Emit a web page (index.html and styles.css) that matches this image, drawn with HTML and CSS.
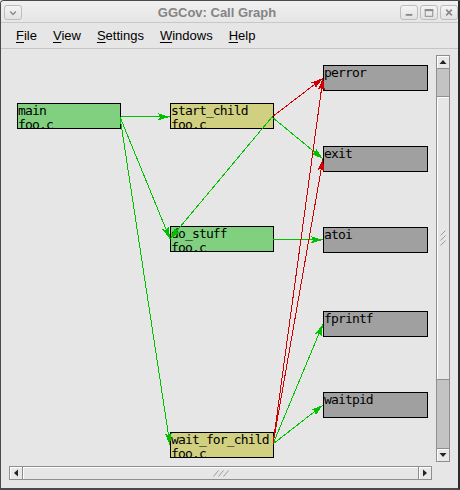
FILE: index.html
```html
<!DOCTYPE html>
<html>
<head>
<meta charset="utf-8">
<title>GGCov: Call Graph</title>
<link rel="stylesheet" href="styles.css">
</head>
<body>
<div class="window">
  <div class="titlebar">
    <div class="tbtn">
      <svg width="17" height="14" viewBox="0 0 17 14"><path d="M5.5,5.5 L8.5,8.5 L11.5,5.5" fill="none" stroke="#8a8a8a" stroke-width="1.6"/></svg>
    </div>
    <div class="title">GGCov: Call Graph</div>
    <div class="tbtns">
      <div class="tbtn"><svg width="17" height="14" viewBox="0 0 17 14"><rect x="5" y="8" width="7" height="2" fill="#8a8a8a"/></svg></div>
      <div class="tbtn"><svg width="17" height="14" viewBox="0 0 17 14"><rect x="4.5" y="3.5" width="8" height="7" fill="none" stroke="#8a8a8a"/><rect x="4" y="3" width="9" height="2" fill="#8a8a8a"/></svg></div>
      <div class="tbtn"><svg width="17" height="14" viewBox="0 0 17 14"><path d="M5.5,3.5 L11.5,9.5 M11.5,3.5 L5.5,9.5" stroke="#8a8a8a" stroke-width="1.8"/></svg></div>
    </div>
  </div>
  <div class="menubar">
    <span class="menu"><u>F</u>ile</span>
    <span class="menu"><u>V</u>iew</span>
    <span class="menu"><u>S</u>ettings</span>
    <span class="menu"><u>W</u>indows</span>
    <span class="menu"><u>H</u>elp</span>
  </div>
  <div class="content">
    <div class="canvas">
      <div class="node green" style="left:8px;top:48px">main<br>foo.c</div>
      <div class="node khaki" style="left:161px;top:48px">start_child<br>foo.c</div>
      <div class="node green" style="left:161px;top:171px">do_stuff<br>foo.c</div>
      <div class="node khaki" style="left:161px;top:377px">wait_for_child<br>foo.c</div>
      <div class="node grey" style="left:314px;top:10px">perror</div>
      <div class="node grey" style="left:314px;top:91px">exit</div>
      <div class="node grey" style="left:314px;top:172px">atoi</div>
      <div class="node grey" style="left:314px;top:256px">fprintf</div>
      <div class="node grey" style="left:314px;top:337px">waitpid</div>
      <svg class="edges" width="423" height="407" viewBox="9 55 423 407">
        <defs>
          <marker id="ag" markerUnits="userSpaceOnUse" markerWidth="13" markerHeight="8" refX="12" refY="4" orient="auto" viewBox="0 0 13 8">
            <path d="M0,0.5 L12,4 L0,7.5 L2,4 z" fill="#00c000"/>
          </marker>
          <marker id="ar" markerUnits="userSpaceOnUse" markerWidth="13" markerHeight="8" refX="12" refY="4" orient="auto" viewBox="0 0 13 8">
            <path d="M0,0.5 L12,4 L0,7.5 L2,4 z" fill="#d00000"/>
          </marker>
        </defs>
        <g class="g">
          <line x1="120" y1="116" x2="170" y2="117" marker-end="url(#ag)"/>
          <line x1="120" y1="117" x2="170" y2="239" marker-end="url(#ag)"/>
          <line x1="120" y1="117" x2="170" y2="445" marker-end="url(#ag)"/>
          <line x1="272" y1="117" x2="170" y2="239" marker-end="url(#ag)"/>
          <line x1="272" y1="117" x2="323" y2="159" marker-end="url(#ag)"/>
          <line x1="272" y1="239" x2="323" y2="240" marker-end="url(#ag)"/>
          <line x1="273" y1="444" x2="323" y2="324" marker-end="url(#ag)"/>
          <line x1="273" y1="444" x2="323" y2="405" marker-end="url(#ag)"/>
        </g>
        <g class="r">
          <line x1="272" y1="117" x2="323" y2="78" marker-end="url(#ar)"/>
          <line x1="273" y1="444" x2="323" y2="78" marker-end="url(#ar)"/>
          <line x1="273" y1="444" x2="323" y2="159" marker-end="url(#ar)"/>
        </g>
      </svg>
    </div>
    <div class="vscroll">
      <div class="sbtn vb-top"><svg width="12" height="12" viewBox="0 0 12 12"><path d="M2.5,8 L6,4 L9.5,8 z" fill="#222"/></svg></div>
      <div class="vtrough-a"></div>
      <div class="vthumb"><svg width="8" height="16" viewBox="0 0 8 16"><path d="M1.5,5.5 L6.5,0.5 M1.5,10.5 L6.5,5.5 M1.5,15.5 L6.5,10.5" stroke="#9a9a9a"/></svg></div>
      <div class="vtrough-b"></div>
      <div class="sbtn vb-bot"><svg width="12" height="12" viewBox="0 0 12 12"><path d="M2.5,4 L6,8 L9.5,4 z" fill="#222"/></svg></div>
    </div>
    <div class="hscroll">
      <div class="sbtn hb-left"><svg width="12" height="12" viewBox="0 0 12 12"><path d="M8,2.5 L4,6 L8,9.5 z" fill="#222"/></svg></div>
      <div class="hthumb"><svg width="16" height="7" viewBox="0 0 16 7"><path d="M0.5,6.5 L5.5,0.5 M5.5,6.5 L10.5,0.5 M10.5,6.5 L15.5,0.5" stroke="#9a9a9a"/></svg></div>
      <div class="sbtn hb-right"><svg width="12" height="12" viewBox="0 0 12 12"><path d="M4,2.5 L8,6 L4,9.5 z" fill="#222"/></svg></div>
    </div>
  </div>
</div>
</body>
</html>
```
FILE: styles.css
```css
* { box-sizing: border-box; }
html, body { margin: 0; padding: 0; background: #e6e6e6; }
.window {
  width: 460px;
  height: 490px;
  background: #e6e6e6;
  border-top: 1px solid #4a4a4a;
  border-left: 1px solid #4a4a4a;
  border-right: 2px solid #2a2a2a;
  border-bottom: 2px solid #4a4a4a;
  border-top-left-radius: 4px;
  display: flex;
  flex-direction: column;
  font-family: "Liberation Sans", Arial, sans-serif;
  overflow: hidden;
}
.titlebar {
  height: 22px;
  flex: none;
  display: flex;
  align-items: center;
  padding: 2px 0 0 3px;
  background: linear-gradient(#f0f0f0, #e6e6e6);
  border-bottom: 1px solid #c8c8c8;
}
.title {
  flex: 1;
  text-align: center;
  padding-left: 12px;
  font-weight: bold;
  font-size: 13px;
  color: #848484;
  line-height: 16px;
}
.tbtns { display: flex; gap: 2px; }
.tbtn {
  width: 18px;
  height: 15px;
  border: 1px solid #bdbdbd;
  border-radius: 3px;
  background: linear-gradient(#f4f4f4, #e2e2e2);
  display: flex;
  align-items: center;
  justify-content: center;
}
.tbtn svg { display: block; }
.menubar {
  height: 26px;
  flex: none;
  display: flex;
  align-items: center;
  padding-left: 7px;
  padding-top: 1px;
  border-bottom: 1px solid #c4c4c4;
  font-size: 13px;
  color: #000;
}
.menu { padding: 0 8px; line-height: 16px; }
.menu u { text-decoration-thickness: 1px; text-underline-offset: 2px; }
.content {
  flex: 1;
  display: grid;
  grid-template-columns: 1fr 14px;
  grid-template-rows: 1fr 14px;
  gap: 4px;
  padding: 6px 8px 8px 8px;
}
.canvas {
  position: relative;
  overflow: hidden;
  background: #e6e6e6;
}
.node {
  position: absolute;
  width: 104px;
  height: 26px;
  border: 1px solid #000;
  overflow: hidden;
  font-family: "DejaVu Sans Mono", "Liberation Mono", monospace;
  font-size: 13px;
  letter-spacing: -0.85px;
  line-height: 14px;
  color: #000;
  white-space: nowrap;
}
.node.grey { width: 105px; }
.green { background: #80d080; }
.khaki { background: #d0d080; }
.grey { background: #a0a0a0; }
.edges {
  position: absolute;
  left: 0;
  top: 0;
  pointer-events: none;
}
.edges line { stroke-width: 1; shape-rendering: crispEdges; }
.edges .g line { stroke: #00c000; }
.edges .r line { stroke: #d00000; }
.edges marker path { shape-rendering: crispEdges; }
.vscroll {
  display: flex;
  flex-direction: column;
  border: 1px solid #8e8e8e;
  background: #c3c3c3;
}
.sbtn {
  flex: none;
  background: #e8e8e8;
  display: flex;
  align-items: center;
  justify-content: center;
  box-shadow: inset 1px 1px #fff;
}
.sbtn svg { display: block; }
.vb-top { height: 13px; border-bottom: 1px solid #8e8e8e; }
.vb-bot { height: 13px; border-top: 1px solid #8e8e8e; }
.vtrough-a { height: 27px; flex: none; }
.vtrough-b { flex: 1; }
.vthumb {
  height: 284px;
  flex: none;
  background: #e6e6e6;
  border-top: 1px solid #8e8e8e;
  border-bottom: 1px solid #8e8e8e;
  box-shadow: inset 1px 1px #fff;
  display: flex;
  align-items: center;
  justify-content: center;
}
.hscroll {
  display: flex;
  border: 1px solid #8e8e8e;
  background: #c3c3c3;
}
.hb-left { width: 13px; border-right: 1px solid #8e8e8e; }
.hb-right { width: 13px; border-left: 1px solid #8e8e8e; }
.hthumb {
  flex: 1;
  background: #e6e6e6;
  box-shadow: inset 1px 1px #fff;
  display: flex;
  align-items: center;
  justify-content: center;
}
```
